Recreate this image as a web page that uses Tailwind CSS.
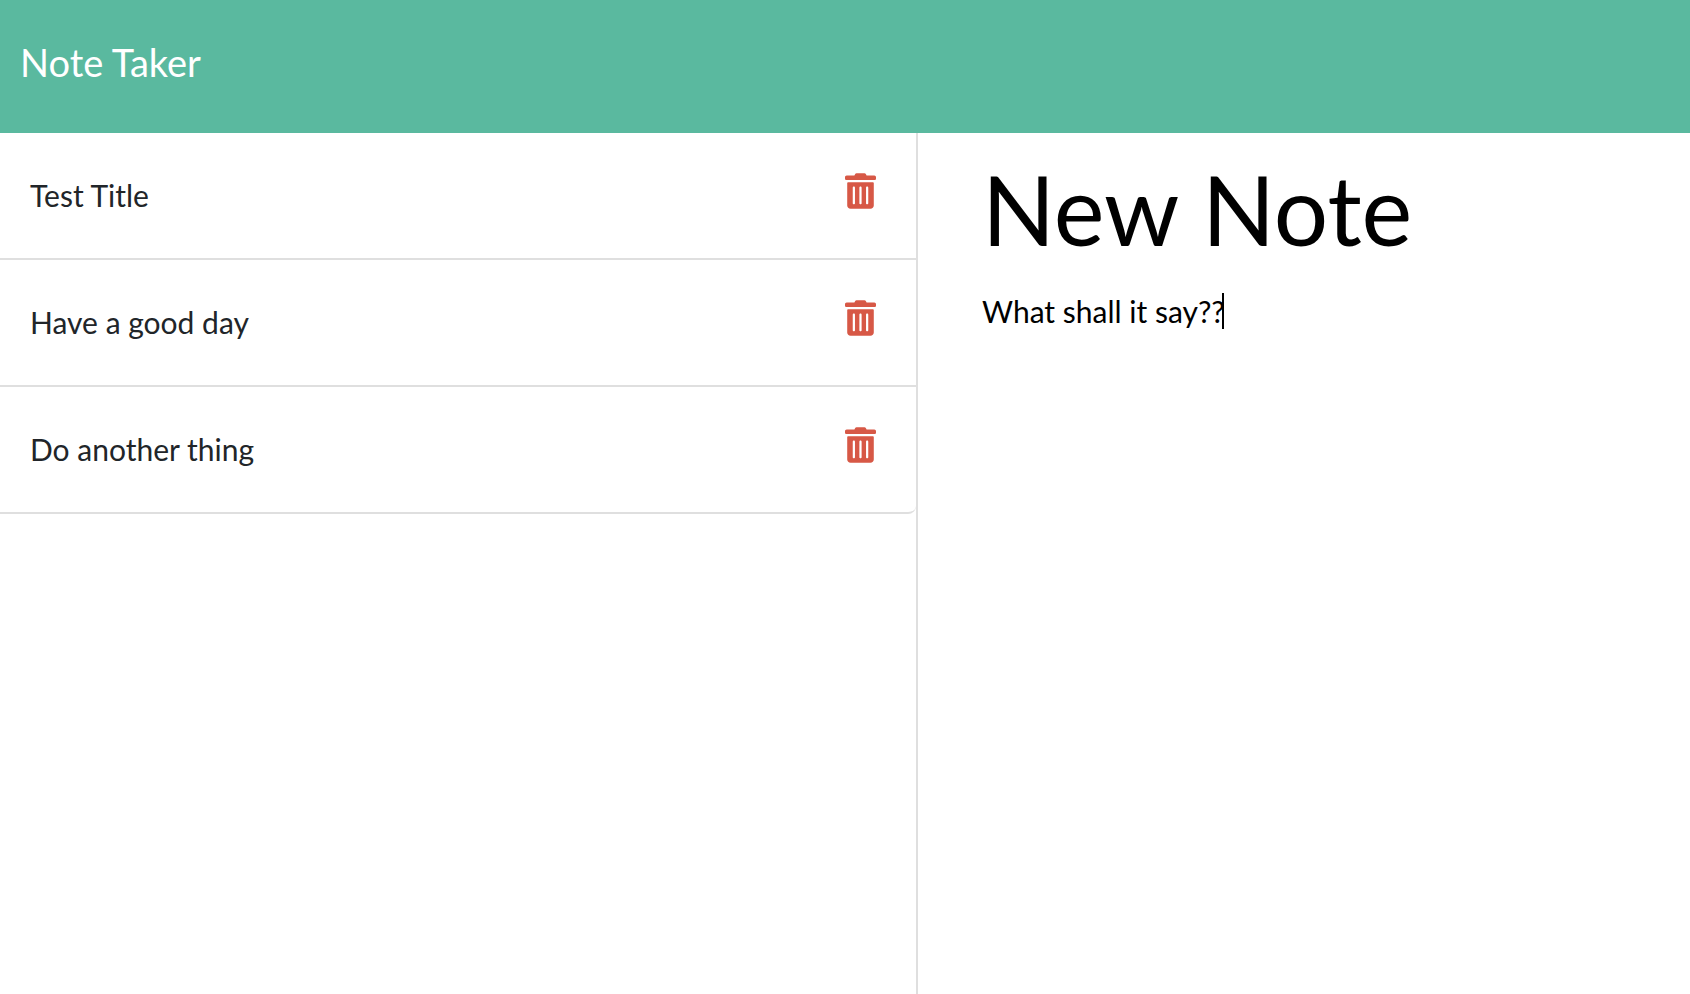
<!DOCTYPE html>
<html lang="en">
<head>
<meta charset="utf-8">
<meta name="viewport" content="width=device-width, initial-scale=1">
<title>Note Taker</title>
<script src="https://cdn.jsdelivr.net/npm/@tailwindcss/browser@4"></script>
</head>
<body class="flex min-h-screen flex-col bg-white font-[Lato,sans-serif] text-[30px] text-[#212529]">
<svg class="hidden" aria-hidden="true">
  <symbol id="trash" viewBox="0 0 448 512">
    <path fill="currentColor" d="M0 84V56c0-13.3 10.7-24 24-24h112l9.4-18.7c4-8.2 12.3-13.3 21.4-13.3h114.3c9.1 0 17.4 5.1 21.5 13.3L312 32h112c13.3 0 24 10.7 24 24v28c0 6.6-5.4 12-12 12H12C5.4 96 0 90.6 0 84zm416 56v324c0 26.5-21.5 48-48 48H80c-26.5 0-48-21.5-48-48V140c0-6.6 5.4-12 12-12h360c6.6 0 12 5.4 12 12zm-272 68c0-8.8-7.2-16-16-16s-16 7.2-16 16v224c0 8.8 7.2 16 16 16s16-7.2 16-16V208zm96 0c0-8.8-7.2-16-16-16s-16 7.2-16 16v224c0 8.8 7.2 16 16 16s16-7.2 16-16V208zm96 0c0-8.8-7.2-16-16-16s-16 7.2-16 16v224c0 8.8 7.2 16 16 16s16-7.2 16-16V208z"/>
  </symbol>
</svg>
<header class="bg-[#5ab99f] px-5 pt-[34px] pb-[42px]">
  <a href="#" class="block text-[38px] leading-[57px] text-white">Note Taker</a>
</header>
<main class="flex grow">
  <section class="w-[54.32%] shrink-0 border-r-2 border-[#dfdfdf]" aria-label="Notes">
    <ul class="overflow-hidden rounded-br-lg border-b-2 border-[#dfdfdf]">
      <li class="flex items-start justify-between border-b-2 border-[#dfdfdf] pt-10 pr-10 pb-10 pl-[30px]">
        <span class="leading-[45px]">Test Title</span>
        <button type="button" class="text-[#d75846]" aria-label="Delete Test Title"><svg class="h-9 w-[31px]"><use href="#trash"/></svg></button>
      </li>
      <li class="flex items-start justify-between border-b-2 border-[#dfdfdf] pt-10 pr-10 pb-10 pl-[30px]">
        <span class="leading-[45px]">Have a good day</span>
        <button type="button" class="text-[#d75846]" aria-label="Delete Have a good day"><svg class="h-9 w-[31px]"><use href="#trash"/></svg></button>
      </li>
      <li class="flex items-start justify-between pt-10 pr-10 pb-10 pl-[30px]">
        <span class="leading-[45px]">Do another thing</span>
        <button type="button" class="text-[#d75846]" aria-label="Delete Do another thing"><svg class="h-9 w-[31px]"><use href="#trash"/></svg></button>
      </li>
    </ul>
  </section>
  <form class="flex min-w-0 grow flex-col pt-[18px] pr-16 pl-16 text-black">
    <input type="text" aria-label="Note title" value="New Note" class="h-[116px] w-full text-[96px] leading-[116px] outline-none">
    <div class="relative mt-[22px] flex grow">
      <textarea aria-label="Note text" class="w-full grow resize-none leading-[45px] caret-transparent outline-none">What shall it say??</textarea>
      <span class="absolute top-1 left-[240px] h-9 w-[2px] bg-black" aria-hidden="true"></span>
    </div>
  </form>
</main>
</body>
</html>
